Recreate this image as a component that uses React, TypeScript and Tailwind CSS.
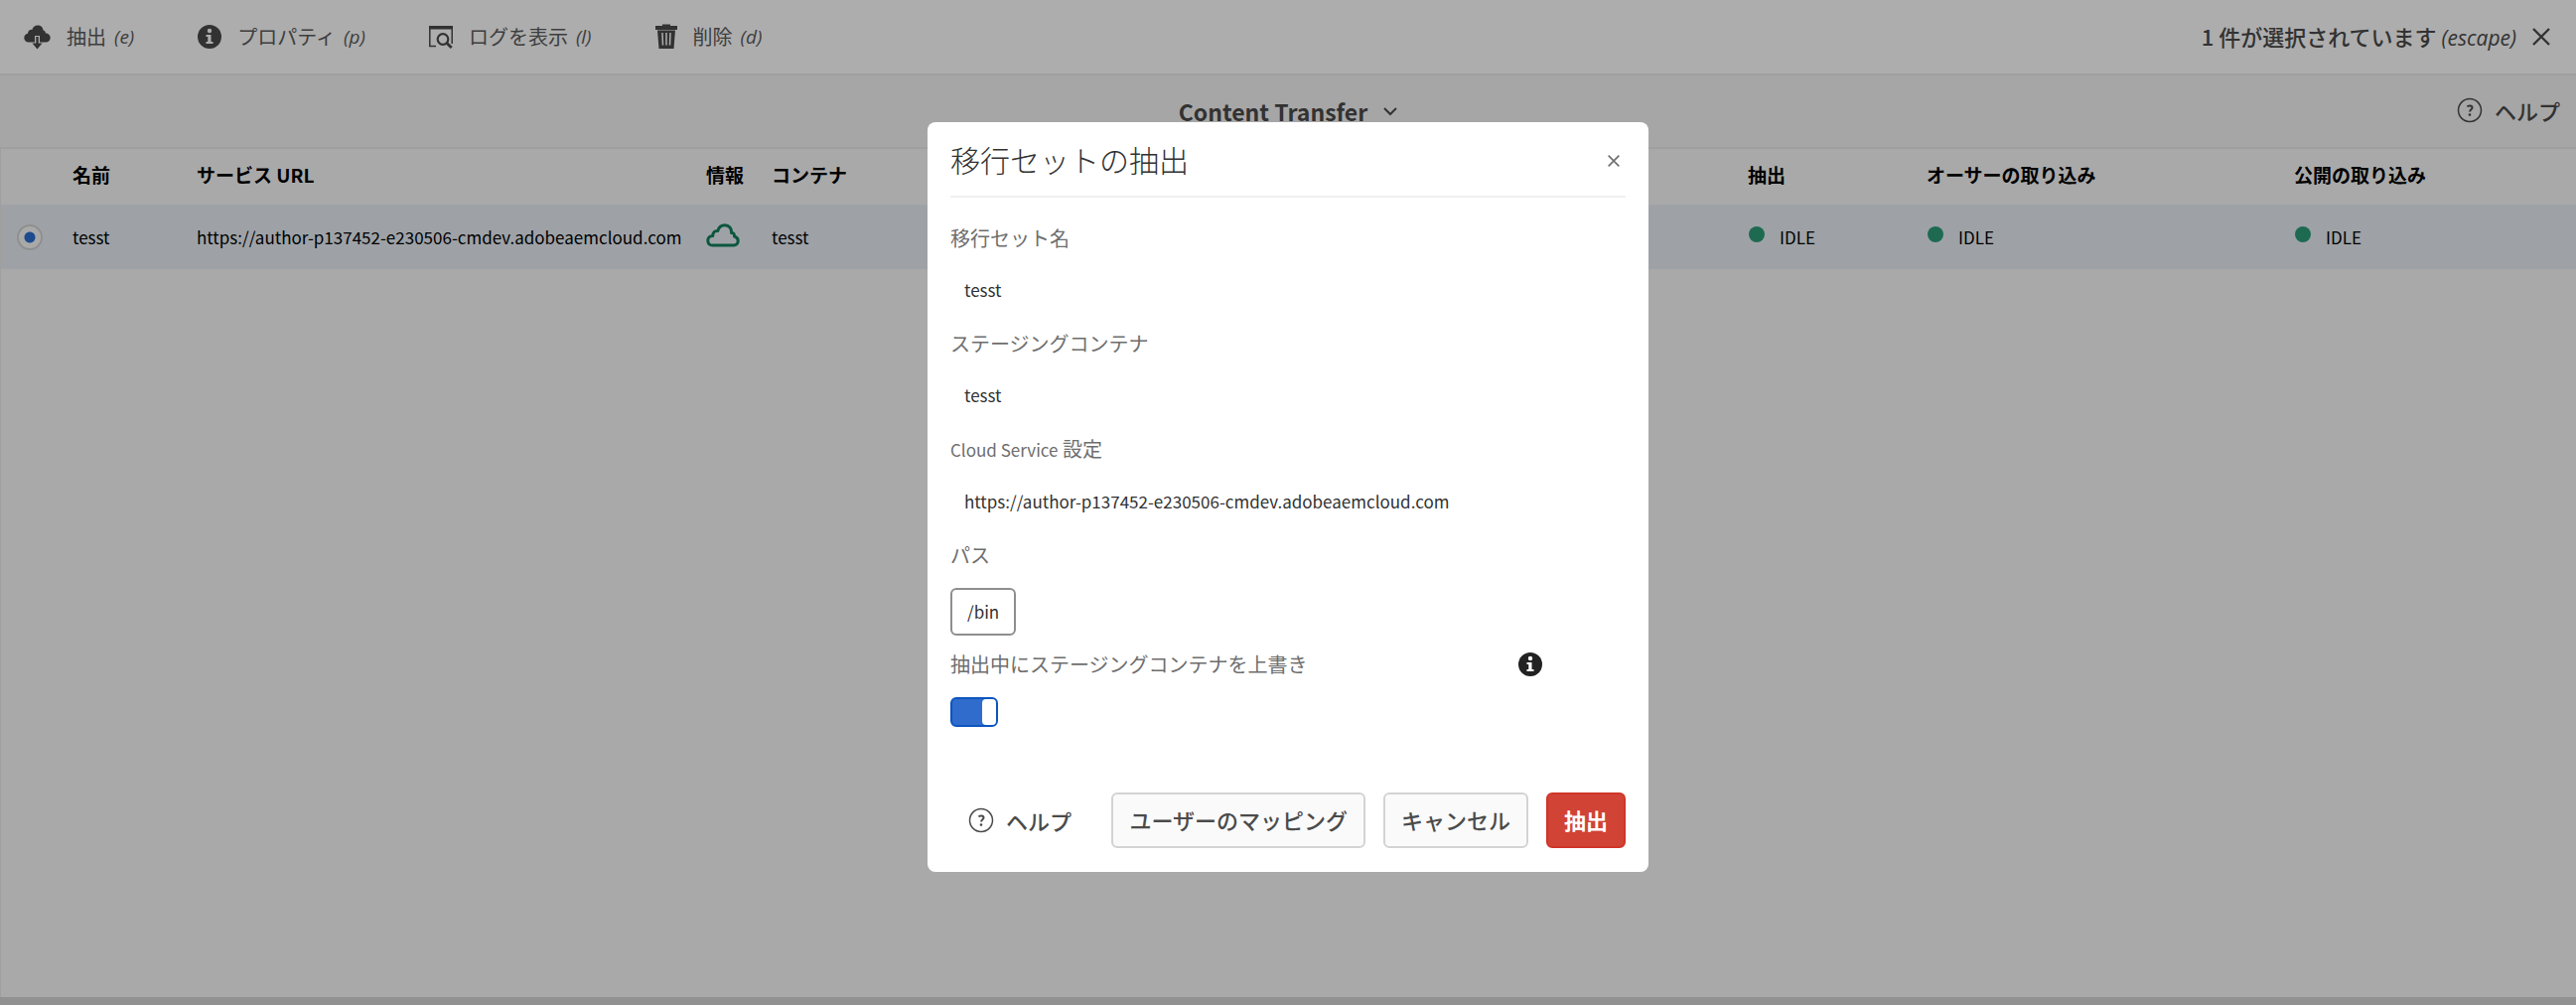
import React from "react";

function CloudDown() {
  return (
    <svg viewBox="0 0 27 25" className="h-[25px] w-[27px] shrink-0" fill="currentColor" aria-hidden="true">
      <path d="M22 8.500C21.800 6.800 20.800 5.800 19.500 5.500 19.300 2.400 17 .5 14 .5c-3 0-5 1.700-5.500 4.300C6 4.600 4 6.300 4 8.800 1.800 9.200.3 10.700.3 13c0 2.500 1.900 4.500 4.500 4.500h17.400c2.600 0 4.500-2 4.500-4.500S24.500 8.500 22 8.500z" />
      <path d="M11 18v-7h5v7z" className="fill-white" />
      <path d="M12.300 12h2.400v6.500h3.800L13.500 24.500l-5-6h3.800z" />
    </svg>
  );
}

function InfoIcon() {
  return (
    <svg viewBox="0 0 24 24" className="h-6 w-6 shrink-0" aria-hidden="true">
      <circle cx="12" cy="12" r="12" fill="currentColor" />
      <circle cx="12" cy="6" r="2.200" className="fill-white" />
      <path d="M8.500 10h5v7h2v2h-7v-2h1.800v-5H8.500z" className="fill-white" />
    </svg>
  );
}

function LogIcon() {
  return (
    <svg viewBox="0 0 24 24" className="h-6 w-6 shrink-0" fill="none" stroke="currentColor" aria-hidden="true">
      <path d="M.8 3v18.500H7M23.200 3v16" strokeWidth="1.500" />
      <path d="M0 1h24v3.500H0z" fill="currentColor" stroke="none" />
      <circle cx="14" cy="14.500" r="5.300" strokeWidth="2.200" />
      <path d="M18 18.500l4.700 4.500" strokeWidth="2.800" />
    </svg>
  );
}

function TrashIcon() {
  return (
    <svg viewBox="0 0 22 26" className="h-[26px] w-[22px] shrink-0" aria-hidden="true">
      <path d="M7 .5h8V2h7v4H0V2h7zM2 6.500h18L18.500 25h-15z" fill="currentColor" />
      <path d="M7 9l.5 12.500M11 9v12.500M15 9l-.5 12.500" className="stroke-white" strokeWidth="1.500" />
    </svg>
  );
}

function HelpIcon() {
  return (
    <svg viewBox="0 0 26 26" className="h-[26px] w-[26px] shrink-0" fill="none" stroke="currentColor" aria-hidden="true">
      <circle cx="13" cy="13" r="11.500" strokeWidth="1.500" />
      <path d="M10.500 9.500c.8-1.500 5-1.600 5 .9 0 1.800-2.400 1.900-2.400 4" strokeWidth="2" />
      <circle cx="13" cy="17.600" r="1.300" fill="currentColor" stroke="none" />
    </svg>
  );
}

function CloudIcon() {
  return (
    <svg viewBox="0 0 34 24" className="mb-1 block h-6 w-[34px]" fill="none" stroke="#12805c" strokeWidth="3" strokeLinejoin="round" aria-hidden="true">
      <path d="M6.500 22C3.500 22 1.800 20 1.800 17.300c0-2.800 1.900-4.800 5-4.800 0-3.500 2-5.500 5-5 1-3.700 3.500-5.700 7-5.700 4.500 0 7.200 3.200 6.700 7.700 2-.3 3.200 1 3 3.500 2.400.7 3.700 2.200 3.700 4.500 0 2.600-1.700 4.500-4.500 4.500z" />
    </svg>
  );
}

function Cross({ className }: { className: string }) {
  return (
    <svg viewBox="0 0 18 18" className={className} fill="none" stroke="currentColor" strokeWidth="2.400" aria-hidden="true">
      <path d="M1 1l16 16M17 1L1 17" />
    </svg>
  );
}

const actions = [
  { label: "抽出", hint: "(e)", icon: <CloudDown /> },
  { label: "プロパティ", hint: "(p)", icon: <InfoIcon /> },
  { label: "ログを表示", hint: "(l)", icon: <LogIcon /> },
  { label: "削除", hint: "(d)", icon: <TrashIcon /> },
];

function Status() {
  return (
    <span className="flex items-center gap-[15px] pl-px">
      <span className="mb-1.5 h-4 w-4 rounded-full bg-[#2d9d78]" />
      IDLE
    </span>
  );
}

const URL_TEXT = "https://author-p137452-e230506-cmdev.adobeaemcloud.com";

function Field({ label, value, id }: { label: React.ReactNode; value: string; id: string }) {
  return (
    <div className="mb-2 flex flex-col">
      <label htmlFor={id} className="text-[20px] leading-[30px] text-[#6e6e6e]">{label}</label>
      <input id={id} readOnly defaultValue={value} className="mt-1 h-16 w-full px-3.5 text-[17px] text-[#323232] outline-none" />
    </div>
  );
}

export default function App() {
  return (
    <div className="relative flex min-h-screen flex-col bg-white font-['Noto_Sans_CJK_JP',sans-serif] text-[#4b4b4b]">
      <header className="flex h-[76px] items-center justify-between border-b-2 border-[#eaeaea] bg-white pr-[26px] pl-6">
        <nav className="flex items-center gap-16">
          {actions.map((a) => (
            <button key={a.label} type="button" className="flex items-center gap-4 text-[20px]">
              {a.icon}
              <span className="flex items-center gap-2 text-[#5c5c5c]">
                {a.label}
                <i className="font-['Open_Sans'] text-[19px]">{a.hint}</i>
              </span>
            </button>
          ))}
        </nav>
        <button type="button" className="flex items-center gap-4 text-[22px] font-medium">
          <span>
            1 件が選択されています <i className="font-['Open_Sans'] text-[21px]">(escape)</i>
          </span>
          <Cross className="h-[18px] w-[18px]" />
        </button>
      </header>

      <div className="grid h-[74px] grid-cols-[1fr_auto_1fr] items-center border-b-2 border-[#eaeaea] bg-[#f5f5f5]">
        <span />
        <button type="button" className="flex items-center gap-4 text-[23px] font-bold">
          Content Transfer
          <svg viewBox="0 0 14 9" className="h-[9px] w-3.5" fill="none" stroke="currentColor" strokeWidth="2" aria-hidden="true">
            <path d="M1 1l6 6 6-6" />
          </svg>
        </button>
        <button type="button" className="mr-4 flex items-center gap-3 justify-self-end pb-0.5 text-[22px] font-medium">
          <HelpIcon />
          ヘルプ
        </button>
      </div>

      <main className="flex-1 border-l border-[#eaeaea] bg-[#fafafa]">
        <table className="w-full table-fixed text-left text-[17px] text-black">
          <colgroup>
            <col className="w-[72px]" />
            <col className="w-[125px]" />
            <col className="w-[513px]" />
            <col className="w-[66px]" />
            <col />
            <col className="w-[180px]" />
            <col className="w-[370px]" />
            <col className="w-[284px]" />
          </colgroup>
          <thead>
            <tr className="h-14 text-[19px] *:pb-1">
              <th aria-label="選択" />
              <th className="font-bold">名前</th>
              <th className="font-bold">サービス URL</th>
              <th className="font-bold">情報</th>
              <th className="font-bold">コンテナ</th>
              <th className="font-bold">抽出</th>
              <th className="font-bold">オーサーの取り込み</th>
              <th className="font-bold">公開の取り込み</th>
            </tr>
          </thead>
          <tbody>
            <tr className="h-[65px] bg-[#e9eff6]">
              <td className="pl-4">
                <input type="radio" name="set" defaultChecked aria-label="tesst" className="block h-[26px] w-[26px] appearance-none rounded-full border-2 border-[#d3d3d3] bg-[radial-gradient(circle,#2c6fd0_5px,#fafafa_6px)]" />
              </td>
              <td>tesst</td>
              <td>{URL_TEXT}</td>
              <td><CloudIcon /></td>
              <td>tesst</td>
              <td><Status /></td>
              <td><Status /></td>
              <td><Status /></td>
            </tr>
          </tbody>
        </table>
      </main>
      <footer className="h-2 bg-[#d6d6d6]" />

      <div className="absolute inset-0 flex items-start justify-center bg-black/32 pt-[123px]">
        <section role="dialog" aria-labelledby="dialog-title" className="w-[726px] rounded-lg bg-white px-[23px] pb-6">
          <div className="flex h-[76px] items-center justify-between border-b-2 border-[#f0f0f0]">
            <h2 id="dialog-title" className="text-[30px] leading-9 font-light text-[#323232]">移行セットの抽出</h2>
            <button type="button" aria-label="閉じる" className="mt-1 p-1.5 text-[#6e6e6e]">
              <Cross className="h-3 w-3" />
            </button>
          </div>

          <div className="flex flex-col pt-[26px]">
            <Field id="set-name" label="移行セット名" value="tesst" />
            <Field id="container" label="ステージングコンテナ" value="tesst" />
            <Field id="cloud" label={<><span className="text-[17px]">Cloud Service</span> 設定</>} value={URL_TEXT} />
            <span className="text-[20px] leading-[30px] text-[#6e6e6e]">パス</span>
            <div className="mt-[18px] flex">
              <span className="rounded-md border-2 border-[#8e8e8e] px-[15px] py-2 text-[17px] leading-7 text-[#323232]">/bin</span>
            </div>
            <div className="mt-3.5 flex items-center justify-between pr-[84px]">
              <label htmlFor="overwrite" className="text-[20px] leading-[30px] text-[#6e6e6e]">抽出中にステージングコンテナを上書き</label>
              <button type="button" aria-label="情報" className="text-[#222222]"><InfoIcon /></button>
            </div>
            <input id="overwrite" type="checkbox" role="switch" defaultChecked className="mt-[18px] flex h-[30px] w-12 appearance-none justify-end rounded-md border-2 border-[#0d55c0] bg-[#2f6ccb] before:w-3.5 before:rounded before:bg-white before:content-['']" />
          </div>

          <div className="mt-[66px] flex items-center text-[22px] font-medium">
            <button type="button" className="mr-auto ml-[18px] flex items-center gap-3">
              <HelpIcon />
              ヘルプ
            </button>
            <button type="button" className="mr-[18px] h-14 rounded-md border-2 border-[#d3d3d3] bg-[#fafafa] px-4 pb-0.5">ユーザーのマッピング</button>
            <button type="button" className="mr-[18px] h-14 rounded-md border-2 border-[#d3d3d3] bg-[#fafafa] px-4 pb-0.5">キャンセル</button>
            <button type="button" className="h-14 rounded-md border-2 border-[#cf3529] bg-[#d14335] px-4 pb-0.5 font-bold text-white">抽出</button>
          </div>
        </section>
      </div>
    </div>
  );
}
